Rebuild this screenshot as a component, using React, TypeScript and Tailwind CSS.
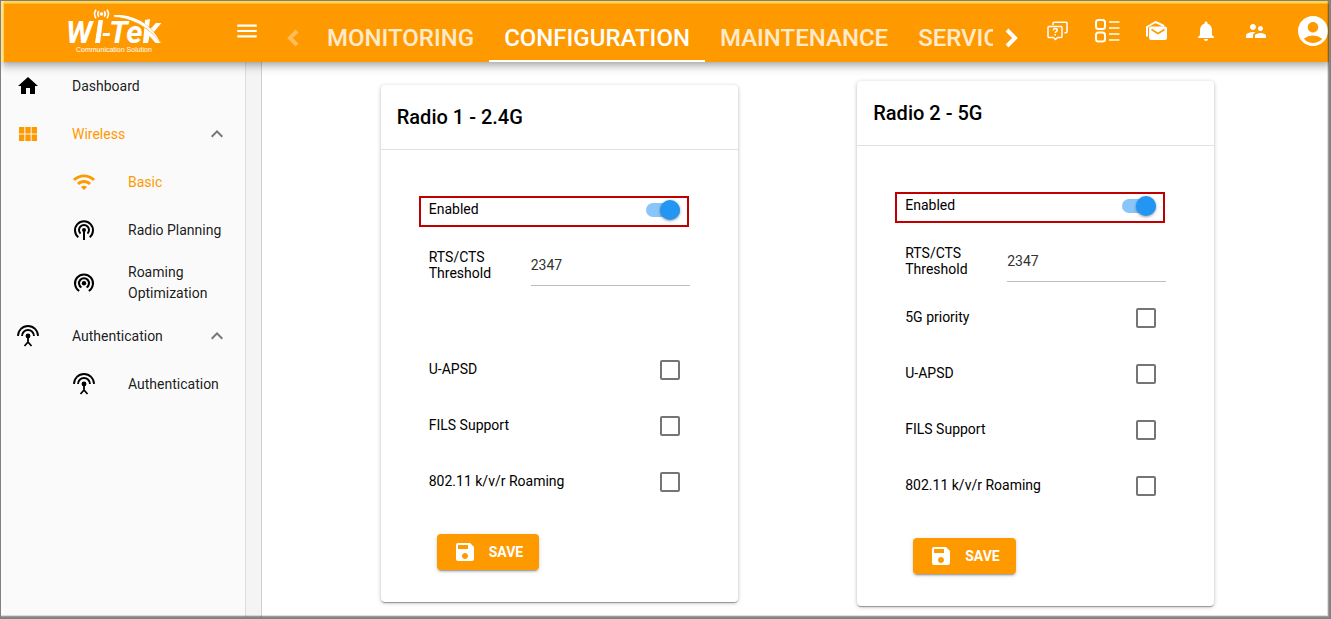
import { useState } from "react";
import type { ReactNode } from "react";
import clsx from "clsx";
import {
  MdAccountCircle,
  MdExpandLess,
  MdHome,
  MdMenu,
  MdNotifications,
  MdSave,
  MdSupervisorAccount,
  MdViewModule,
  MdWifi,
} from "react-icons/md";

const TABS = ["Monitoring", "Configuration", "Maintenance", "Services"];

function Logo() {
  return (
    <svg viewBox="0 0 96 46" className="h-[46px] w-24" fill="#fff" role="img" aria-label="Wi-Tek">
      <g fill="none" stroke="#fff" strokeWidth="1.6">
        <path d="M29 1.800a7.500 7.500 0 0 0 0 8.500M31.800 3.300a4.500 4.500 0 0 0 0 5.500M37.200 3.300a4.500 4.500 0 0 1 0 5.500M40 1.800a7.500 7.500 0 0 1 0 8.500" />
      </g>
      <circle cx="34.500" cy="6" r="1.800" />
      <text x="-1" y="35" fontSize="31" fontWeight="700" fontStyle="italic" fontFamily="Roboto, sans-serif">
        W
      </text>
      <path d="M31.500 12h4.500l-3 23h-5z" />
      <path d="M36 25h7l-.5 3h-7z" />
      <text x="42" y="35" fontSize="31" fontWeight="700" fontStyle="italic" fontFamily="Roboto, sans-serif">
        Te
      </text>
      <path d="M78 12l5-1-1.500 12L89 15h5.500L86 25l9 10h-6.500l-6-7-1.500 7h-5z" />
      <path d="M47 7.500C62 6.500 82 12 94 35 80 17 63 10 47 9z" stroke="#ff9900" strokeWidth=".8" />
      <path d="M47 7C62 6 82 12 93 34 80 16 63 10 47 8.500z" />
      <text x="9" y="44" fontSize="7" fontFamily="Liberation Sans, sans-serif">
        Communication Solution
      </text>
    </svg>
  );
}

function QuestionIcon() {
  return (
    <svg viewBox="0 0 24 24" className="size-6" fill="none" stroke="#fff" strokeWidth="1.500" strokeLinejoin="round">
      <path d="M8 6V4.300Q8 3.300 9 3.300h12q1 0 1 1v8.500q0 1-1 1h-1.500" />
      <path d="M4 7.500h12q1 0 1 1v9q0 1-1 1h-3.500l-2 2-2-2H4q-1 0-1-1v-9q0-1 1-1z" />
      <path d="M8.300 11.300q.2-1.700 2-1.700 1.900 0 1.900 1.600c0 1.400-2 1.400-2 2.800M10.200 15v1.500" />
    </svg>
  );
}

function ListIcon() {
  return (
    <svg viewBox="0 0 26 26" className="size-[26px]" fill="none" stroke="#fff" strokeWidth="2">
      <rect x="2" y="2" width="9" height="9" rx="2.500" />
      <rect x="2" y="14.500" width="9" height="9" rx="2.500" />
      <path d="M15 4h10.500M15 10h10.500M15 16h10.500M15 22h10.500" strokeWidth="1.600" />
    </svg>
  );
}

function MailIcon() {
  return (
    <svg viewBox="0 0 24 24" className="size-6" fill="none">
      <path d="M3 17.500V8l8.500-5L20 7" stroke="#fff" strokeWidth="2" strokeLinejoin="round" />
      <rect x="5" y="7.500" width="18" height="13.500" rx="2" fill="#fff" />
      <path d="M7.500 10.500l6.500 4 6.500-4" stroke="#ff9900" strokeWidth="1.500" />
    </svg>
  );
}

function RadioPlanIcon() {
  return (
    <svg viewBox="0 0 24 24" className="size-6" fill="none" stroke="currentColor" strokeWidth="2">
      <path d="M6.300 19.300a9 9 0 1 1 11.400 0M8.500 15.600a5 5 0 1 1 7 0M12 12v10" />
      <circle cx="12" cy="12" r="2" fill="currentColor" stroke="none" />
    </svg>
  );
}

function RoamingIcon() {
  return (
    <svg viewBox="0 0 24 24" className="size-6" fill="none" stroke="currentColor" strokeWidth="2">
      <path d="M7.200 20a9 9 0 1 1 9.600 0M9.400 16.500a5 5 0 1 1 5.200 0" />
      <circle cx="12" cy="12.300" r="2.200" fill="currentColor" stroke="none" />
    </svg>
  );
}

function AntennaIcon() {
  return (
    <svg viewBox="0 0 24 24" className="size-6" fill="none" stroke="currentColor" strokeWidth="1.800">
      <path d="M2 12a10 10 0 0 1 20 0M6 12a6 6 0 0 1 12 0" />
      <path d="M12 12v6M8.500 22l3.500-4 3.500 4" />
      <circle cx="12" cy="12" r="2.400" fill="currentColor" stroke="none" />
    </svg>
  );
}

interface NavItemProps {
  icon: ReactNode;
  label: string;
  active?: boolean;
  nested?: boolean;
  expandable?: boolean;
}

function NavItem({ icon, label, active, nested, expandable }: NavItemProps) {
  return (
    <li>
      <a
        href="#"
        className={clsx(
          "flex min-h-12 items-center gap-8 py-2 pr-4",
          nested ? "pl-[68px]" : "pl-3",
          active ? "text-[#ff9900]" : "text-black/90"
        )}
      >
        <span className={clsx("shrink-0", !active && "text-black")}>{icon}</span>
        <span className="flex-1 leading-[21px]">{label}</span>
        {expandable && <MdExpandLess className="size-6 text-[#757575]" />}
      </a>
    </li>
  );
}

function CheckRow({ id, label }: { id: string; label: string }) {
  return (
    <div className="flex h-14 items-center justify-between pt-px pr-[10px]">
      <label htmlFor={id} className="pb-0.5">
        {label}
      </label>
      <input
        id={id}
        type="checkbox"
        className="size-5 appearance-none rounded-xs border-2 border-[#757575] checked:bg-[#ff9900]"
      />
    </div>
  );
}

interface RadioCardProps {
  id: string;
  title: string;
  /** 5G radios have an extra priority option */
  hasPriority?: boolean;
}

function RadioCard({ id, title, hasPriority }: RadioCardProps) {
  const [enabled, setEnabled] = useState(true);
  const [threshold, setThreshold] = useState("2347");

  return (
    <section className="w-full max-w-[357px] rounded-sm bg-white shadow-[0_2px_1px_-1px_rgba(0,0,0,0.2),0_1px_1px_rgba(0,0,0,0.16),0_1px_4px_rgba(0,0,0,0.24)]">
      <h2 className="border-b border-[#e0e0e0] px-4 py-4 text-xl leading-8 font-medium">{title}</h2>
      <form className="px-12 pt-[46px] pb-8" onSubmit={(e) => e.preventDefault()}>
        <div className="-ml-[10px] mr-px flex h-[31px] items-center justify-between border-2 border-[#c00000] pr-[7px] pb-1 pl-2">
          <label htmlFor={`${id}-enabled`} className="pb-0.5 leading-5">
            Enabled
          </label>
          <input
            id={`${id}-enabled`}
            type="checkbox"
            role="switch"
            checked={enabled}
            onChange={(e) => setEnabled(e.target.checked)}
            className="relative h-[14px] w-[34px] appearance-none rounded-full bg-black/30 before:absolute before:-top-[3px] before:left-0 before:size-5 before:rounded-full before:bg-white before:shadow-[0_1px_3px_rgba(0,0,0,0.4)] checked:bg-[#8ac6f9] checked:before:left-[14px] checked:before:bg-[#2196f3]"
          />
        </div>

        <div className="mt-[17px] mb-[7px] flex items-center">
          <label htmlFor={`${id}-rts`} className="w-[102px] shrink-0 pr-4 leading-4">
            RTS/CTS Threshold
          </label>
          <input
            id={`${id}-rts`}
            type="text"
            value={threshold}
            onChange={(e) => setThreshold(e.target.value)}
            className="h-[42px] w-full min-w-0 border-b border-[#bdbdbd] text-[#333] outline-none"
          />
        </div>

        {hasPriority ? <CheckRow id={`${id}-priority`} label="5G priority" /> : <div className="h-12" />}
        <CheckRow id={`${id}-uapsd`} label="U-APSD" />
        <CheckRow id={`${id}-fils`} label="FILS Support" />
        <CheckRow id={`${id}-roaming`} label="802.11 k/v/r Roaming" />

        <button
          type="submit"
          className="mt-[25px] ml-2 flex h-9 items-center gap-3 rounded-sm bg-[#ff9900] px-4 font-bold text-white shadow-[0_3px_1px_-2px_rgba(0,0,0,0.2),0_2px_2px_rgba(0,0,0,0.14),0_1px_5px_rgba(0,0,0,0.12)]"
        >
          <MdSave className="size-6" />
          SAVE
        </button>
      </form>
    </section>
  );
}

function TopBar() {
  const [tab, setTab] = useState("Configuration");

  return (
    <header className="relative z-10 flex h-[62px] items-center bg-[#ff9900] text-white shadow-[inset_3px_3px_#ffd84a,inset_4px_4px_#ffb52e,0_2px_10px_rgba(0,0,0,0.45)]">
      <a href="#" className="ml-[67px] shrink-0">
        <Logo />
      </a>
      <button type="button" aria-label="Menu" className="ml-[71px] shrink-0">
        <MdMenu className="size-[26px]" />
      </button>
      <button
        type="button"
        aria-label="Previous tabs"
        disabled
        className="ml-[14px] flex w-[38px] shrink-0 justify-center pt-[14px] opacity-35"
      >
        <svg viewBox="0 0 24 24" className="size-6" fill="none" stroke="#fff" strokeWidth="4">
          <path d="M16 5l-7 7 7 7" />
        </svg>
      </button>
      <nav className="flex h-full min-w-0 flex-1 overflow-hidden">
        {TABS.map((name) => (
          <button
            key={name}
            type="button"
            onClick={() => setTab(name)}
            className={clsx(
              "shrink-0 border-b-2 px-[15px] pt-4 text-2xl font-medium uppercase",
              tab === name ? "border-white" : "border-transparent text-white/80"
            )}
          >
            {name}
          </button>
        ))}
      </nav>
      <button type="button" aria-label="Next tabs" className="flex w-[38px] shrink-0 justify-center pt-[14px]">
        <svg viewBox="0 0 24 24" className="size-6" fill="none" stroke="#fff" strokeWidth="4">
          <path d="M7 4l8 8-8 8" />
        </svg>
      </button>
      <div className="flex shrink-0 items-center">
        <button type="button" aria-label="Help" className="flex w-[52px] justify-center">
          <QuestionIcon />
        </button>
        <button type="button" aria-label="Tasks" className="flex w-12 justify-center">
          <ListIcon />
        </button>
        <button type="button" aria-label="Mail" className="flex w-[50px] justify-center">
          <MailIcon />
        </button>
        <button type="button" aria-label="Notifications" className="flex w-[50px] justify-center">
          <MdNotifications className="size-6" />
        </button>
        <button type="button" aria-label="Users" className="flex w-[50px] justify-center">
          <MdSupervisorAccount className="size-6" />
        </button>
        <button type="button" aria-label="Account" className="ml-[14px] flex">
          <MdAccountCircle className="size-9" />
        </button>
      </div>
    </header>
  );
}

export default function App() {
  return (
    <div className="relative flex min-h-screen flex-col overflow-hidden bg-white font-['Roboto',sans-serif] text-sm text-black/90">
      <TopBar />
      <div className="flex flex-1">
        <aside className="w-[246px] shrink-0 border-r border-[#dddddd] bg-[#fafafa] pl-1">
          <ul>
            <NavItem icon={<MdHome className="size-6" />} label="Dashboard" />
            <NavItem icon={<MdViewModule className="size-6" />} label="Wireless" active expandable />
            <NavItem icon={<MdWifi className="size-6" />} label="Basic" active nested />
            <NavItem icon={<RadioPlanIcon />} label="Radio Planning" nested />
            <NavItem icon={<RoamingIcon />} label="Roaming Optimization" nested />
            <NavItem icon={<AntennaIcon />} label="Authentication" expandable />
            <NavItem icon={<AntennaIcon />} label="Authentication" nested />
          </ul>
        </aside>
        <div className="w-4 shrink-0 border-r border-[#d0d0d0] bg-[#f4f4f4]" />
        <main className="grid flex-1 grid-cols-2 items-center justify-items-center pt-[19px] pr-[57px] pb-[13px] pl-[59px] text-black">
          <RadioCard id="radio1" title="Radio 1 - 2.4G" />
          <RadioCard id="radio2" title="Radio 2 - 5G" hasPriority />
        </main>
      </div>
      {/* bevelled window edge */}
      <div className="pointer-events-none absolute inset-0 z-20 shadow-[inset_0_0_0_1px_#808080,inset_-2px_-2px_#858585,inset_-3px_-3px_rgba(0,0,0,0.3),inset_-4px_-4px_rgba(0,0,0,0.12),inset_4px_0_rgba(255,255,255,0.3)]" />
    </div>
  );
}
